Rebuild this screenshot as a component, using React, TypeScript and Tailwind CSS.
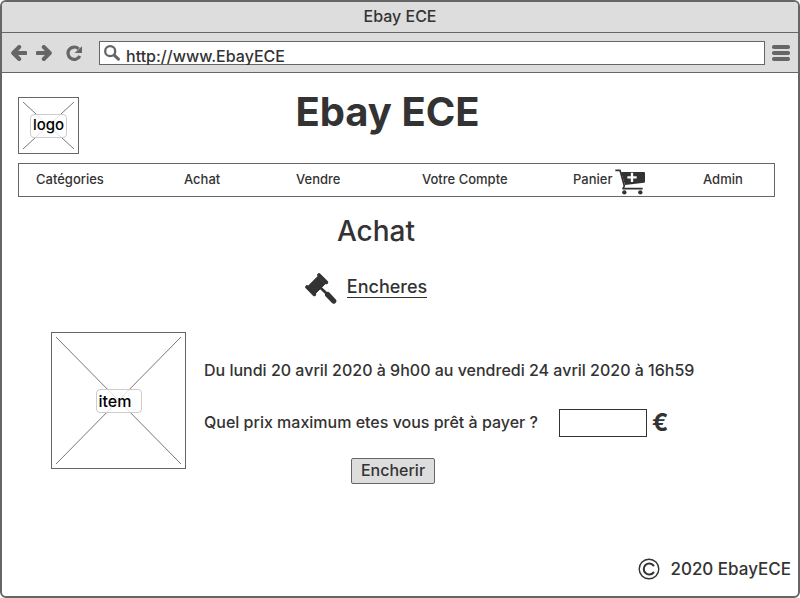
import React from "react";

const navItems = ["Catégories", "Achat", "Vendre", "Votre Compte", "Panier", "Admin"];

function BackIcon() {
  return (
    <svg className="h-4 w-4" viewBox="0 0 16 16" fill="none" stroke="#666" aria-hidden="true">
      <path d="M3 8H14.5" strokeWidth="4" strokeLinecap="round" />
      <path d="M8.2 2L2.2 8L8.2 14" strokeWidth="4" strokeLinecap="round" strokeLinejoin="round" />
    </svg>
  );
}

function ForwardIcon() {
  return (
    <svg className="h-4 w-4" viewBox="0 0 16 16" fill="none" stroke="#666" aria-hidden="true">
      <path d="M1.5 8H13" strokeWidth="4" strokeLinecap="round" />
      <path d="M7.8 2L13.8 8L7.8 14" strokeWidth="4" strokeLinecap="round" strokeLinejoin="round" />
    </svg>
  );
}

function ReloadIcon() {
  return (
    <svg className="h-4 w-4" viewBox="0 0 16 16" fill="none" aria-hidden="true">
      <path d="M12.6 3.8A6.2 6.2 0 1 0 13.8 11" stroke="#666" strokeWidth="3.2" />
      <path d="M16.4 1V8H8.6Z" fill="#666" />
    </svg>
  );
}

function SearchIcon() {
  return (
    <svg className="h-4 w-4 shrink-0" viewBox="0 0 16 16" fill="none" stroke="#666" aria-hidden="true">
      <circle cx="6.2" cy="6.2" r="5" strokeWidth="2.3" />
      <path d="M10.2 10.2L14.4 14.2" strokeWidth="3" strokeLinecap="round" />
    </svg>
  );
}

function MenuIcon() {
  return (
    <svg className="h-4 w-[18px]" viewBox="0 0 18 16" fill="#666" aria-hidden="true">
      <rect width="18" height="4" rx="1.8" />
      <rect y="6" width="18" height="4" rx="1.8" />
      <rect y="12" width="18" height="4" rx="1.8" />
    </svg>
  );
}

function CartIcon() {
  return (
    <svg className="h-[26px] w-[31px]" viewBox="258 57 93 78" fill="#333" aria-hidden="true">
      <path d="M259 61H273L286 108L282 116H341" fill="none" stroke="#333" strokeWidth="5" strokeLinejoin="round" />
      <path d="M276 66H345Q348 66 348 69V95Q348 98 345 98L288 105Z" />
      <path d="M309 68V96M295 82H323" stroke="#fff" strokeWidth="7" />
      <circle cx="286" cy="127" r="6.5" />
      <circle cx="334" cy="127" r="6.5" />
    </svg>
  );
}

function GavelIcon() {
  return (
    <svg className="h-8 w-8" viewBox="40 203 96 96" fill="#333" stroke="#333" aria-hidden="true">
      <path d="M82 209L104 231M46 245L68 267" strokeWidth="11" strokeLinecap="round" />
      <path d="M79 213L101 235L71 265L49 243Z" strokeWidth="3" />
      <path d="M84 245L104 264" strokeWidth="8" />
      <path d="M108 268L126 287" strokeWidth="16" strokeLinecap="round" />
    </svg>
  );
}

function Cross() {
  return (
    <svg className="col-start-1 row-start-1 h-full w-full p-1" aria-hidden="true">
      <line x1="0" y1="0" x2="100%" y2="100%" stroke="#777" />
      <line x1="100%" y1="0" x2="0" y2="100%" stroke="#777" />
    </svg>
  );
}

export default function App() {
  return (
    <div className="flex min-h-screen flex-col rounded-md border-2 border-[#666] bg-white font-['Inter',sans-serif] font-medium text-[#333]">
      <div className="flex h-[31px] items-center justify-center rounded-t border-b border-[#666] bg-[#ddd] pb-[2px] text-base leading-5">
        Ebay ECE
      </div>
      <div className="flex h-10 items-center border-b border-[#666] bg-[#ddd] pr-2 pl-[9px]">
        <button type="button" aria-label="Précédent" className="mr-[9px]"><BackIcon /></button>
        <button type="button" aria-label="Suivant" className="mr-[14px]"><ForwardIcon /></button>
        <button type="button" aria-label="Actualiser" className="mr-[17px]"><ReloadIcon /></button>
        <label className="flex h-6 min-w-0 flex-1 gap-[6px] border border-[#666] bg-white pt-[3px] pl-1">
          <SearchIcon />
          <input
            type="text"
            aria-label="Adresse"
            defaultValue="http://www.EbayECE"
            className="mt-[2px] h-[18px] min-w-0 flex-1 text-base leading-[18px] outline-none"
          />
        </label>
        <button type="button" aria-label="Menu" className="ml-[7px]"><MenuIcon /></button>
      </div>

      <header className="pt-6 pr-[23px] pl-4">
        <div className="grid grid-cols-[61px_1fr_79px]">
          <div className="grid h-[57px] place-items-center border border-[#666]">
            <Cross />
            <span className="z-10 col-start-1 row-start-1 flex h-6 items-center rounded border border-[#ccc] bg-white/80 px-[2px] text-[15px] text-black">
              logo
            </span>
          </div>
          <h1 className="text-center text-[40px] leading-[30px] font-bold">Ebay ECE</h1>
        </div>
        <nav className="mt-[9px] border border-[#666] pl-[17px]">
          <ul className="grid h-8 grid-cols-[148fr_112fr_126fr_151fr_130fr_71fr] items-center text-[13px] leading-4">
            {navItems.map((item) => (
              <li key={item}>
                <a href="#" className="flex h-8 items-center gap-[3px] whitespace-nowrap">
                  <span className="pb-[2px]">{item}</span>
                  {item === "Panier" && <span className="pt-[3px]"><CartIcon /></span>}
                </a>
              </li>
            ))}
          </ul>
        </nav>
      </header>

      <main>
        <h2 className="mt-4 pr-12 text-center text-[28px] leading-9">Achat</h2>
        <div className="mt-6 flex items-center justify-center gap-[10px] pr-[68px]">
          <GavelIcon />
          <a href="#" className="mb-[3px] border-b border-[#333] text-lg leading-5">Encheres</a>
        </div>

        <div className="mt-[27px] flex gap-[18px] pl-[49px]">
          <div className="grid h-[137px] w-[135px] shrink-0 place-items-center border border-[#666]">
            <Cross />
            <span className="z-10 col-start-1 row-start-1 flex h-6 w-[46px] items-center rounded border border-[#ccc] bg-white/80 px-[2px] text-base text-black">
              item
            </span>
          </div>
          <form className="pt-7" onSubmit={(event) => event.preventDefault()}>
            <p className="text-base leading-5">Du lundi 20 avril 2020 à 9h00 au vendredi 24 avril 2020 à 16h59</p>
            <div className="mt-[29px] flex h-7 items-center">
              <label htmlFor="prix" className="min-w-[345px] pb-[2px] text-base leading-5">Quel prix maximum etes vous prêt à payer ?</label>
              <input id="prix" type="text" className="ml-[10px] h-7 w-[88px] border border-[#333] px-2" />
              <span className="ml-[5px] text-2xl font-bold">€</span>
            </div>
            <button type="submit" className="mt-[21px] ml-[147px] h-[26px] w-[84px] rounded-xs border border-[#666] bg-[#ddd] pb-[2px] text-base leading-5">
              Encherir
            </button>
          </form>
        </div>
      </main>

      <footer className="mt-auto flex items-center justify-end gap-[10px] pr-[7px] pb-4">
        <svg className="h-[22px] w-[22px]" viewBox="0 0 22 22" fill="none" stroke="#333" aria-hidden="true">
          <circle cx="11" cy="11" r="9.8" strokeWidth="1.4" />
          <path d="M15.5 7.5A5.5 5.5 0 1 0 15.5 14.5" strokeWidth="2" strokeLinecap="round" />
        </svg>
        <p className="text-[17px] leading-5">2020 EbayECE</p>
      </footer>
    </div>
  );
}
